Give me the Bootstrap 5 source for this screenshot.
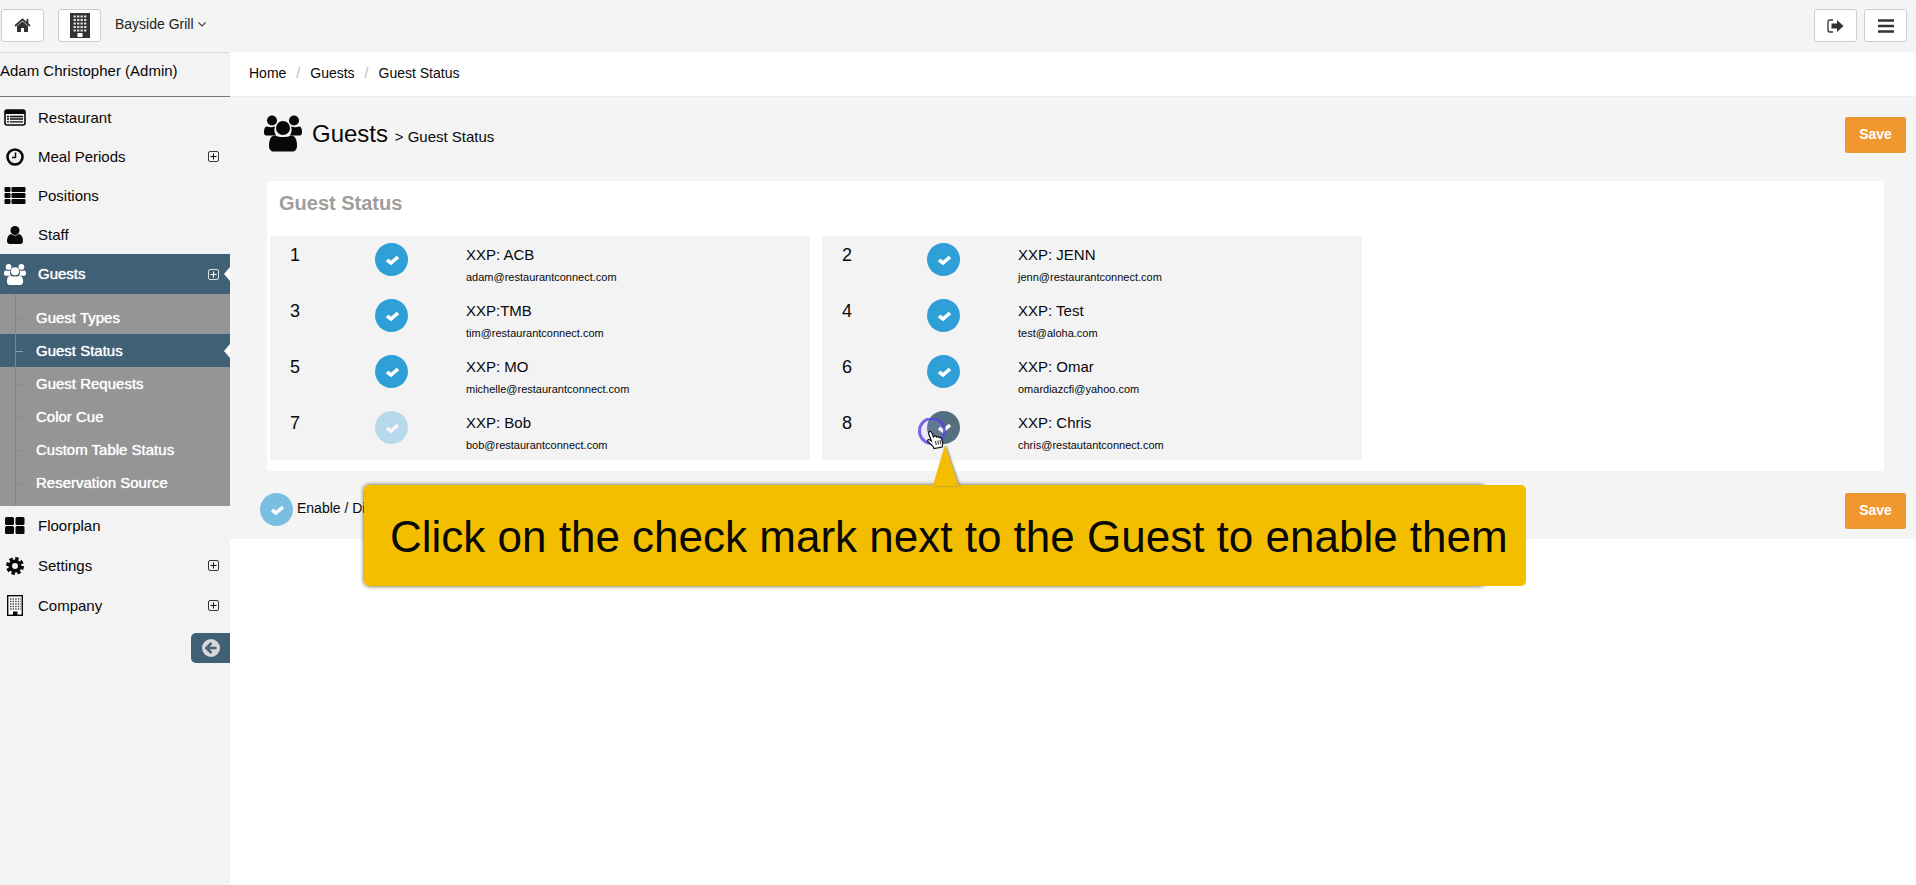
<!DOCTYPE html>
<html lang="en">
<head>
<meta charset="utf-8">
<meta name="viewport" content="width=device-width, initial-scale=1">
<title>Guest Status</title>
<link href="https://cdn.jsdelivr.net/npm/bootstrap@5.3.0/dist/css/bootstrap.min.css" rel="stylesheet">
<style>
  :root { --bar: #406075; --pane: #f3f4f4; --blue: #2f9fd7; }
  body { font-family: "Liberation Sans", Arial, sans-serif; font-size: 14px; line-height: 20px; color: #080808; background: #fff; }
  a { color: inherit; text-decoration: none; }
  svg { display: block; flex: none; }
  .topbar { height: 52px; background: var(--pane); padding: 9px 9px 0 1px; }
  .tool-btn { width: 43px; height: 33px; padding: 0; border: 1px solid #ccc; border-radius: 3px; background: #fff; color: #333; display: flex; align-items: center; justify-content: center; }
  .tool-group { gap: 14px; }
  .tool-group.tight { gap: 7px; }
  .venue { border: 0; background: none; padding: 0; color: #222; height: 30px; }
  .sidebar { width: 230px; flex: none; background: #f3f3f3; }
  .user-name { height: 45px; font-size: 15px; border-top: 1px solid #ddd; border-bottom: 1px solid #777; padding-top: 8px; }
  .main-nav { padding-top: 1px; }
  .side-link { display: flex; align-items: center; height: 39px; padding: 0 11px 0 4px; font-size: 15px; position: relative; }
  .side-link > svg:first-child { width: 22px; margin-right: 12px; }
  .side-link.current { height: 40px; }
  .lower-nav { row-gap: 1px; }
  .current { background: var(--bar); color: #fff; text-shadow: 0 0 1px #fff; }
  .current::after { content: ""; position: absolute; right: 0; top: 50%; margin-top: -7px; border: 7px solid transparent; border-right: 6px solid #fff; border-left: 0; }
  .subnav { background: #959595; color: #fff; padding: 7px 0; font-size: 15px; position: relative; text-shadow: 0 0 1px #fff; }
  .subnav::before { content: ""; position: absolute; left: 15px; top: 0; bottom: 0; border-left: 1px solid #838383; z-index: 1; }
  .sub-link { display: flex; align-items: center; height: 33px; padding-left: 36px; position: relative; }
  .sub-link::before { content: ""; position: absolute; left: 15px; top: 17px; width: 6px; border-top: 1px solid #8a8a8a; }
  .sub-link.current::before { width: 8px; border-color: #8ba0ad; }
  .collapse-btn { width: 39px; height: 30px; margin-top: 8px; border: 0; border-radius: 5px 0 0 5px; background: var(--bar); color: #d5d8da; display: flex; align-items: center; justify-content: center; }
  .crumbs { height: 45px; padding: 0 19px 3px; border-bottom: 1px solid #ececec; }
  .crumbs .breadcrumb { --bs-breadcrumb-divider-color: #bbb; --bs-breadcrumb-item-padding-x: 10px; }
  .crumbs .active { color: inherit; }
  .work { background: #f4f4f4; }
  .page-head { height: 84px; padding: 0 10px 8px 34px; }
  .page-title { font-size: 24px; line-height: 30px; margin: 0 0 0 10px; font-weight: 400; }
  .page-title small { font-size: 15px; }
  .save-btn { width: 61px; height: 36px; padding: 0 0 2px; border: 0; border-radius: 3px; background: #f0982f; color: #fff; font-weight: 700; font-size: 14px; box-shadow: inset 0 0 1px #b98544; }
  .panel { margin: 0 32px 0 37px; background: #fff; border-radius: 3px; padding: 0 3px 11px; }
  .panel h2 { font-size: 20px; line-height: 44px; height: 55px; margin: 0; padding-left: 9px; font-weight: 700; color: #9d9d9d; }
  .status-table { width: 100%; background: #f3f3f4; border-collapse: collapse; table-layout: fixed; }
  .status-table td { height: 56px; padding: 0; vertical-align: top; }
  .status-table td.num { font-size: 18px; line-height: 22px; padding: 8px 0 0 20px; }
  .status-cols { display: grid; grid-template-columns: repeat(3, 1fr); column-gap: 12px; margin-right: -33px; }
  .c-num { width: 105px; } .c-tick { width: 91px; }
  .tick { appearance: none; display: block; width: 33px; height: 33px; border: 0; border-radius: 50%; margin: 0; background: var(--blue) url("data:image/svg+xml,%3Csvg xmlns='http://www.w3.org/2000/svg' viewBox='0 0 33 33'%3E%3Cpath d='M12 17l4 3 7-6' fill='none' stroke='%23fff' stroke-width='3.6'/%3E%3C/svg%3E") center/100%; flex: none; }
  .tick:not(:checked) { opacity: .3; }
  .tick.hovered { opacity: 1; background-color: #546f80; }
  .tick.legend-tick { opacity: .62; }
  .tick-wrap { padding-top: 7px; position: relative; width: 33px; }
  .guest { font-size: 15px; line-height: 20px; padding-top: 9px; }
  .mail { font-size: 11px; line-height: 14px; padding-top: 5px; }
  .pointer { position: absolute; left: -10px; top: 14px; }
  .page-foot { height: 68px; padding: 0 10px 0 30px; position: relative; }
  .legend { padding-top: 22px; gap: 4px; }
  .page-foot .save-btn { margin-top: 22px; }
  .callout { position: absolute; z-index: 5; left: 134px; top: 14px; padding: 2px 20px 0 26px; border-radius: 5px; color: #080808; font-size: 44px; line-height: 99px; white-space: nowrap; width: 1162px; }
  .callout::before { content: ""; position: absolute; inset: 0 41px 0 0; border-radius: 5px; box-shadow: 0 0 4px #554c30; z-index: -1; }
  .callout-face { position: absolute; inset: 0; background: #f3be00; border-radius: 5px; z-index: -1; }
  .callout-tip { position: absolute; left: 567px; top: -40px; filter: drop-shadow(1px 0 1px #888); }
</style>
</head>
<body class="min-vh-100 d-flex flex-column">
<svg class="d-none">
  <symbol id="people" viewBox="0 0 38 36"><g fill="currentColor"><circle cx="8" cy="5" r="5"/><circle cx="30" cy="5" r="5"/><path d="M3 11c3 1 5 1 8 0-1 3-1 5 1 9H3c-3 0-3-2-3-4 0-3 1-5 3-5zM35 11c-3 1-5 1-8 0 1 3 1 5-1 9h9c3 0 3-2 3-4 0-3-1-5-3-5z"/><circle cx="19" cy="12.500" r="7"/><path d="M11 20c5 2 11 2 16 0 4 0 6 4 6 10 0 4-2 6-5 6H10c-3 0-5-2-5-6 0-6 2-10 6-10z"/></g></symbol>
  <symbol id="plus" viewBox="0 0 11 11"><rect x=".5" y=".5" width="10" height="10" rx="1.500" fill="none" stroke="currentColor" stroke-opacity=".8"/><path d="M5.500 2.500v6M2.500 5.500h6" stroke="currentColor"/></symbol>
</svg>

<header class="topbar d-flex">
  <div class="tool-group d-flex">
    <button class="tool-btn" type="button" aria-label="Home"><svg width="17" height="15" viewBox="0 0 17 15"><path d="M8.500 3.500L14 8v6h-4v-4H7v4H3V8z" fill="currentColor"/><path d="M1 8l7.500-6.500L16 8M13.500 1v4.500" fill="none" stroke="currentColor" stroke-width="1.800"/></svg></button>
    <button class="tool-btn" type="button" aria-label="Company"><svg width="20" height="25" viewBox="0 0 20 25"><path d="M0 0h20v25H0z" fill="#333"/><path d="M3.500 3.500h13M3.500 7h13M3.500 10.500h13M3.500 14h13M3.500 17.500h13" stroke="#ddd" stroke-width="2.200" stroke-dasharray="2.400 1.100"/><path d="M7.500 20h5v4h-5z" fill="#fff"/></svg></button>
    <button class="venue d-flex align-items-center" type="button">Bayside Grill <svg class="ms-1" width="8" height="5" viewBox="0 0 8 5"><path d="M.5.5L4 4 7.500.5" fill="none" stroke="#444" stroke-width="1.200"/></svg></button>
  </div>
  <div class="tool-group tight d-flex ms-auto">
    <button class="tool-btn" type="button" aria-label="Log out"><svg width="17" height="14" viewBox="0 0 17 14"><path d="M6 1H3Q1 1 1 3v8q0 2 2 2h3" fill="none" stroke="currentColor" stroke-width="1.300"/><path d="M4.500 4.500H10V1l6.500 6L10 13V9.500H4.500z" fill="currentColor"/></svg></button>
    <button class="tool-btn" type="button" aria-label="Menu"><svg width="16" height="14" viewBox="0 0 16 14"><path d="M0 1.500h16M0 7h16M0 12.500h16" stroke="currentColor" stroke-width="2.400"/></svg></button>
  </div>
</header>

<div class="d-flex flex-grow-1">
  <aside class="sidebar">
    <div class="user-name">Adam Christopher (Admin)</div>
    <nav class="main-nav d-flex flex-column">
      <a class="side-link" href="#"><svg height="17" viewBox="0 0 22 17"><rect x="1" y="1" width="20" height="15" rx="2" fill="none" stroke="currentColor" stroke-width="1.600"/><path d="M1 1h20v4H1z" fill="currentColor"/><path d="M3 7.500h2M3 10h2M3 12.800h2M6 7.500h13M6 10h13M6 12.800h13" stroke="currentColor" stroke-width="1.300"/></svg>Restaurant</a>
      <a class="side-link" href="#"><svg height="18" viewBox="0 0 22 18"><circle cx="11" cy="9" r="7.500" fill="none" stroke="currentColor" stroke-width="2.600"/><path d="M11.500 4.500v5H8" fill="none" stroke="currentColor" stroke-width="1.500"/></svg>Meal Periods<svg class="ms-auto" width="11" height="11"><use href="#plus"/></svg></a>
      <a class="side-link" href="#"><svg height="17" viewBox="0 0 22 17" fill="currentColor"><rect x=".5" width="6" height="5" rx="1"/><rect x=".5" y="6" width="6" height="5" rx="1"/><rect x=".5" y="12" width="6" height="5" rx="1"/><rect x="7.500" width="14" height="5" rx="1"/><rect x="7.500" y="6" width="14" height="5" rx="1"/><rect x="7.500" y="12" width="14" height="5" rx="1"/></svg>Positions</a>
      <a class="side-link" href="#"><svg height="18" viewBox="0 0 22 18" fill="currentColor"><circle cx="11" cy="4.500" r="4.500"/><path d="M7 8c3 2 5 2 8 0 3 1 4 4 4 7 0 2-1 3-3 3H6c-2 0-3-1-3-3 0-3 1-6 4-7z"/></svg>Staff</a>
      <a class="side-link current" href="#"><svg height="21"><use href="#people"/></svg>Guests<svg class="ms-auto" width="11" height="11"><use href="#plus"/></svg></a>
    </nav>
    <div class="subnav">
      <a class="sub-link" href="#">Guest Types</a>
      <a class="sub-link current" href="#">Guest Status</a>
      <a class="sub-link" href="#">Guest Requests</a>
      <a class="sub-link" href="#">Color Cue</a>
      <a class="sub-link" href="#">Custom Table Status</a>
      <a class="sub-link" href="#">Reservation Source</a>
    </div>
    <nav class="lower-nav d-flex flex-column">
      <a class="side-link" href="#"><svg height="17" viewBox="0 0 22 17" fill="currentColor"><rect x="1" width="9" height="8" rx="1.500"/><rect x="11.500" width="9" height="8" rx="1.500"/><rect x="1" y="9" width="9" height="8" rx="1.500"/><rect x="11.500" y="9" width="9" height="8" rx="1.500"/></svg>Floorplan</a>
      <a class="side-link" href="#"><svg height="18" viewBox="0 0 22 18"><circle cx="11" cy="9" r="7.500" fill="none" stroke="currentColor" stroke-width="3" stroke-dasharray="3.400 2.490"/><circle cx="11" cy="9" r="4.800" fill="none" stroke="currentColor" stroke-width="3.600"/></svg>Settings<svg class="ms-auto" width="11" height="11"><use href="#plus"/></svg></a>
      <a class="side-link" href="#"><svg height="21" viewBox="0 0 22 21"><rect x="3.700" y=".7" width="14.600" height="19.600" fill="#fff" stroke="currentColor" stroke-width="1.400"/><path d="M6 4h11M6 6.500h11M6 9h11M6 11.500h11M6 14h11" stroke="#444" stroke-width="1.400" stroke-dasharray="1.400 1.200"/><path d="M9 16.500h4.500V20H9z" fill="currentColor"/></svg>Company<svg class="ms-auto" width="11" height="11"><use href="#plus"/></svg></a>
    </nav>
    <button class="collapse-btn ms-auto" type="button" aria-label="Collapse sidebar"><svg width="18" height="18" viewBox="0 0 18 18"><circle cx="9" cy="9" r="9" fill="currentColor"/><path d="M9.500 4L4.500 9l5 5M5 9h9.500" fill="none" stroke="#4c6270" stroke-width="2.600"/></svg></button>
  </aside>

  <main class="flex-grow-1">
    <nav class="crumbs d-flex align-items-center" aria-label="breadcrumb">
      <ol class="breadcrumb mb-0">
        <li class="breadcrumb-item"><a href="#">Home</a></li>
        <li class="breadcrumb-item"><a href="#">Guests</a></li>
        <li class="breadcrumb-item active" aria-current="page">Guest Status</li>
      </ol>
    </nav>
    <div class="work">
      <div class="page-head d-flex align-items-center">
        <svg width="38" height="37" class="mb-1"><use href="#people"/></svg>
        <h1 class="page-title">Guests <small>&gt; Guest Status</small></h1>
        <button class="save-btn ms-auto" type="button">Save</button>
      </div>
      <section class="panel">
        <h2>Guest Status</h2>
        <div class="status-cols">
          <table class="status-table">
            <colgroup><col class="c-num"><col class="c-tick"><col></colgroup>
            <tr><td class="num">1</td><td><div class="tick-wrap"><input class="tick" type="checkbox" checked aria-label="XXP: ACB"></div></td><td><div class="guest">XXP: ACB</div><div class="mail">adam@restaurantconnect.com</div></td></tr>
            <tr><td class="num">3</td><td><div class="tick-wrap"><input class="tick" type="checkbox" checked aria-label="XXP:TMB"></div></td><td><div class="guest">XXP:TMB</div><div class="mail">tim@restaurantconnect.com</div></td></tr>
            <tr><td class="num">5</td><td><div class="tick-wrap"><input class="tick" type="checkbox" checked aria-label="XXP: MO"></div></td><td><div class="guest">XXP: MO</div><div class="mail">michelle@restaurantconnect.com</div></td></tr>
            <tr><td class="num">7</td><td><div class="tick-wrap"><input class="tick" type="checkbox" aria-label="XXP: Bob"></div></td><td><div class="guest">XXP: Bob</div><div class="mail">bob@restaurantconnect.com</div></td></tr>
          </table>
          <table class="status-table">
            <colgroup><col class="c-num"><col class="c-tick"><col></colgroup>
            <tr><td class="num">2</td><td><div class="tick-wrap"><input class="tick" type="checkbox" checked aria-label="XXP: JENN"></div></td><td><div class="guest">XXP: JENN</div><div class="mail">jenn@restaurantconnect.com</div></td></tr>
            <tr><td class="num">4</td><td><div class="tick-wrap"><input class="tick" type="checkbox" checked aria-label="XXP: Test"></div></td><td><div class="guest">XXP: Test</div><div class="mail">test@aloha.com</div></td></tr>
            <tr><td class="num">6</td><td><div class="tick-wrap"><input class="tick" type="checkbox" checked aria-label="XXP: Omar"></div></td><td><div class="guest">XXP: Omar</div><div class="mail">omardiazcfi@yahoo.com</div></td></tr>
            <tr><td class="num">8</td><td><div class="tick-wrap"><input class="tick hovered" type="checkbox" aria-label="XXP: Chris">
              <svg class="pointer" width="34" height="34" viewBox="0 0 34 34"><circle cx="15" cy="13" r="12.500" fill="#b9b5ff" fill-opacity=".15" stroke="#5146e0" stroke-opacity=".8" stroke-width="3"/><path d="M12 14c1-1 2.500-.5 3 1l1.500 4 1-.8c1-.6 2 0 2.300.8.9-.8 2-.4 2.400.6.900-.4 2.100 0 2.400 1l1.200 4.500-.6 3.900-8.200 1.500-1.200-2.500-5-4.500c-.8-1.500.8-2.500 2.200-1.500l1.400 1-2.600-7c-.3-.8-.3-1.500.2-2z" fill="#fff" stroke="#111" stroke-width="1.200"/><path d="M18.500 23l.8 4M20.800 22.500l.8 4M23 22l.8 4" stroke="#222"/></svg></div></td><td><div class="guest">XXP: Chris</div><div class="mail">chris@restautantconnect.com</div></td></tr>
          </table>
        </div>
      </section>
      <footer class="page-foot d-flex align-items-start">
        <div class="legend d-flex align-items-center"><input class="tick legend-tick" type="checkbox" checked id="all"><label for="all" class="mb-1">Enable / Disable</label></div>
        <button class="save-btn ms-auto" type="button">Save</button>
        <div class="callout" role="tooltip"><span class="callout-face"></span><svg class="callout-tip" width="30" height="41" viewBox="0 0 30 41"><path d="M14 0l14 41H2z" fill="#f3be00"/></svg>Click on the check mark next to the Guest to enable them</div>
      </footer>
    </div>
  </main>
</div>
<script src="https://cdn.jsdelivr.net/npm/bootstrap@5.3.0/dist/js/bootstrap.bundle.min.js"></script>
</body>
</html>
